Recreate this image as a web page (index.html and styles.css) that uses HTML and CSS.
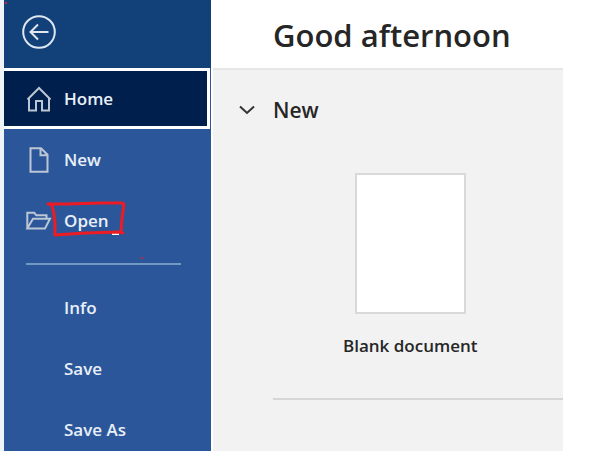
FILE: index.html
```
<!DOCTYPE html>
<html lang="en">
  <head>
    <meta charset="utf-8">
    <meta name="viewport" content="width=device-width, initial-scale=1.0">
    <title>Word</title>
    <link rel="stylesheet" href="styles.css">
  </head>
  <body>
    <div class="backstage">
      <nav class="sidebar">
        <span class="handle"></span>
        <svg class="speck" width="4" height="4" viewBox="0 0 4 4"><path class="dot" d="M1 3h2"/></svg>
        <div class="sidebar-top">
          <button class="back" type="button" aria-label="Back">
            <svg width="34" height="34" viewBox="0 0 34 34">
              <circle cx="17" cy="17" r="15.8"/>
              <path d="M26.500 17H9M16 9.500L8.500 17l7.500 7.500"/>
            </svg>
          </button>
        </div>
        <a class="item active" href="#home">
          <svg class="icon" width="26" height="26" viewBox="0 0 26 26">
            <path d="M1.500 13.500L13 2l11.500 11.500M3 12v12.500h7V15h6v9.500h7V12"/>
          </svg>
          <span>Home</span>
        </a>
        <a class="item" href="#new">
          <svg class="icon" width="26" height="26" viewBox="0 0 26 26">
            <path d="M4.500 1.200h10.500l6.500 6.500v17H4.500zM14.500 1.200v7h7"/>
          </svg>
          <span>New</span>
        </a>
        <a class="item" href="#open">
          <svg class="icon" width="26" height="26" viewBox="0 0 26 26">
            <path d="M1.300 20.500V4.800h7l2 2.500h10.200v3.500M1.300 20.500L7 10.800h17l-5 9.700z"/>
          </svg>
          <span>Open</span>
          <!-- hand drawn marker -->
          <svg class="marker" width="96" height="74" viewBox="0 0 96 74">
            <path class="pen-white" d="M66 44h7"/>
            <path class="dot-white" d="M31 43v2"/>
            <path class="pen" d="M2 14l4 1 2 9 1 10 0 11 31-2 33-1 4 1M2 14l18 0 36-1 20 0 2 1-2 14-1 14"/>
            <path class="dot" d="M95 68h2"/>
          </svg>
        </a>
        <hr class="divider">
        <a class="item sub" href="#info">Info</a>
        <a class="item sub" href="#save">Save</a>
        <a class="item sub" href="#saveas">Save As</a>
      </nav>
      <main class="content">
        <h1 class="greeting">Good afternoon</h1>
        <section class="start">
          <h2 class="section-title">
            <button class="toggle" type="button" aria-expanded="true">
              <svg class="chevron" width="16" height="10" viewBox="0 0 16 10"><path d="M1 1.500l7 6.500 7-6.500"/></svg>
              <span>New</span>
            </button>
          </h2>
          <button class="template" type="button">
            <span class="page"></span>
            <span>Blank document</span>
          </button>
          <hr class="rule">
        </section>
      </main>
    </div>
  </body>
</html>
```
FILE: styles.css
```
body
{
  margin: 0;
  background: #fff;
  color: #262626;
  font-family: "Open Sans", "Noto Sans", sans-serif;
  font-size: 17px;
  font-weight: 600;
  line-height: 24px;
}

button
{
  padding: 0;
  border: 0;
  background: none;
  color: inherit;
  font: inherit;
  cursor: pointer;
}

svg
{
  fill: none;
  overflow: visible;
}

.backstage
{
  display: flex;
  height: 100vh;
  overflow: hidden;
  border-left: 4px solid #edf5fb;
  box-sizing: border-box;
}

/* left menu */
.sidebar
{
  flex: 0 0 207px;
  position: relative;
  background: #2b579a;
  color: #fff;
}

.sidebar-top
{
  display: flex;
  align-items: center;
  box-sizing: border-box;
  height: 68px;
  padding: 0 18px 4px;
  background: #124078;
}

.back
{
  display: flex;
  stroke: #dfe7f1;
  stroke-width: 2;
}

.item
{
  display: flex;
  align-items: center;
  gap: 12px;
  position: relative;
  box-sizing: border-box;
  height: 61px;
  padding: 0 22px;
  color: #e9eff8;
  text-decoration: none;
}

.item:hover
{
  background: #124078;
}

.active,
.active:hover
{
  margin-right: 1px;
  background: #001f4d;
  border: solid #fff;
  border-width: 3px 3px 3px 0;
}

.sub
{
  padding-left: 60px;
}

.icon
{
  stroke: #bcc6d4;
  stroke-width: 2;
}

.divider
{
  height: 2px;
  margin: 12px 30px 12px 22px;
  border: 0;
  background: #7398c4;
}

.marker
{
  position: absolute;
  left: 42px;
  top: 0;
  pointer-events: none;
}

.pen
{
  stroke: #ed1c24;
  stroke-width: 3;
  stroke-linejoin: round;
  stroke-linecap: round;
}

.pen-white,
.dot-white
{
  stroke: #fff;
  stroke-width: 2;
}

.dot
{
  stroke: #c0283c;
  stroke-width: 2;
}

.speck
{
  position: absolute;
  left: 0;
  top: 0;
}

.handle
{
  position: absolute;
  left: -6px;
  top: 314px;
  width: 4px;
  height: 4px;
  border: 1px solid #333;
  background: #fff;
}

/* right side */
.content
{
  flex: 1;
  display: flex;
  flex-direction: column;
  margin-right: 46px;
}

.greeting
{
  box-sizing: border-box;
  height: 68px;
  margin: 0;
  padding: 14px 0 0 62px;
  font-size: 31px;
  font-weight: 600;
  line-height: 42px;
}

.start
{
  flex: 1;
  margin-left: 2px;
  padding-top: 24px;
  border-top: 2px solid #e6e6e6;
  background: #f2f2f2;
}

.section-title
{
  margin: 0 0 0 26px;
  font-size: 21px;
  font-weight: 600;
  line-height: 32px;
}

.toggle
{
  display: flex;
  align-items: center;
  gap: 18px;
}

.chevron
{
  stroke: #333;
  stroke-width: 2;
}

.template
{
  display: flex;
  flex-direction: column;
  align-items: center;
  gap: 20px;
  margin: 47px 0 0 130px;
}

.page
{
  box-sizing: border-box;
  width: 111px;
  height: 141px;
  border: 2px solid #d9d9d9;
  background: #fff;
}

.rule
{
  height: 2px;
  margin: 40px 0 0 60px;
  border: 0;
  background: #d6d6d6;
}
```
